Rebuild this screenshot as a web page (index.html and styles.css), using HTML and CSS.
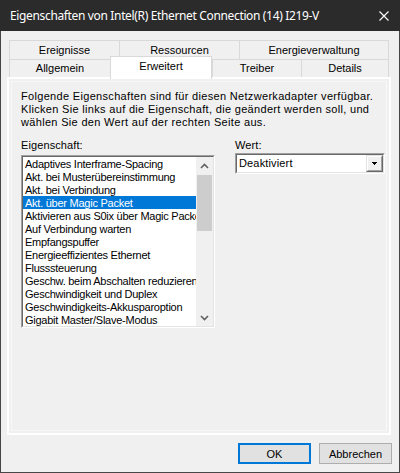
FILE: index.html
```html
<!DOCTYPE html>
<html lang="de">
<head>
<meta charset="utf-8">
<title>Eigenschaften</title>
<link rel="stylesheet" href="styles.css">
</head>
<body>
<div class="window">
  <div class="titlebar">
    <span class="title">Eigenschaften von Intel(R) Ethernet Connection (14) I219-V</span>
    <svg class="close" width="10" height="10" viewBox="0 0 10 10"><path d="M0.5 0.5 L9.5 9.5 M9.5 0.5 L0.5 9.5" stroke="#fff" stroke-width="1.1" fill="none"/></svg>
  </div>
  <div class="client">
    <div class="tabs">
      <div class="tabrow row1">
        <div class="tab w-ereignisse">Ereignisse</div>
        <div class="tab w-ressourcen">Ressourcen</div>
        <div class="tab w-energie last">Energieverwaltung</div>
      </div>
      <div class="tabrow row2">
        <div class="tab w-allgemein">Allgemein</div>
        <div class="tab w-erweitert selected">Erweitert</div>
        <div class="tab w-treiber">Treiber</div>
        <div class="tab w-details last">Details</div>
      </div>
    </div>
    <div class="pane">
      <div class="page">
        <p class="intro">Folgende Eigenschaften sind für diesen Netzwerkadapter verfügbar.<br>Klicken Sie links auf die Eigenschaft, die geändert werden soll, und<br>wählen Sie den Wert auf der rechten Seite aus.</p>
        <div class="columns">
          <div class="col-left">
            <div class="label">Eigenschaft:</div>
            <div class="sunken listbox">
              <div class="sunken-in list-in">
                <div class="items">
                  <div class="item">Adaptives Interframe-Spacing</div>
                  <div class="item">Akt. bei Musterübereinstimmung</div>
                  <div class="item">Akt. bei Verbindung</div>
                  <div class="item sel">Akt. über Magic Packet</div>
                  <div class="item">Aktivieren aus S0ix über Magic Packet</div>
                  <div class="item">Auf Verbindung warten</div>
                  <div class="item">Empfangspuffer</div>
                  <div class="item">Energieeffizientes Ethernet</div>
                  <div class="item">Flusssteuerung</div>
                  <div class="item">Geschw. beim Abschalten reduzieren</div>
                  <div class="item">Geschwindigkeit und Duplex</div>
                  <div class="item">Geschwindigkeits-Akkusparoption</div>
                  <div class="item">Gigabit Master/Slave-Modus</div>
                </div>
                <div class="vscroll">
                  <div class="sbtn"><svg width="9" height="6" viewBox="0 0 9 6"><path d="M1 5 L4.5 1.5 L8 5" stroke="#606060" stroke-width="1.6" fill="none"/></svg></div>
                  <div class="track"><div class="thumb"></div></div>
                  <div class="sbtn"><svg width="9" height="6" viewBox="0 0 9 6"><path d="M1 1 L4.5 4.5 L8 1" stroke="#606060" stroke-width="1.6" fill="none"/></svg></div>
                </div>
              </div>
            </div>
          </div>
          <div class="col-right">
            <div class="label">Wert:</div>
            <div class="sunken combo">
              <div class="sunken-in combo-in">
                <span class="combo-text">Deaktiviert</span>
                <div class="raised dropbtn">
                  <div class="raised-in">
                    <svg width="5" height="3" viewBox="0 0 5 3" shape-rendering="crispEdges"><path d="M0 0 H5 V1 H4 V2 H3 V3 H2 V2 H1 V1 H0 Z" fill="#000"/></svg>
                  </div>
                </div>
              </div>
            </div>
          </div>
        </div>
      </div>
    </div>
    <div class="buttons">
      <button class="btn default">OK</button>
      <button class="btn">Abbrechen</button>
    </div>
  </div>
</div>
</body>
</html>
```
FILE: styles.css
```css
* { box-sizing: border-box; }
html, body { margin: 0; padding: 0; }
body {
  width: 400px;
  height: 473px;
  overflow: hidden;
  font-family: "Liberation Sans", Arial, sans-serif;
  font-size: 11px;
  color: #000;
}
.window {
  width: 400px;
  height: 473px;
  border: 1px solid #474747;
  border-top: 0;
  background: #f0f0f0;
  display: flex;
  flex-direction: column;
}
.titlebar {
  height: 31px;
  margin: 0 -1px;
  background: #2b2b2b;
  display: flex;
  align-items: center;
  justify-content: space-between;
  padding: 0 11px 0 10px;
  flex: none;
}
.title {
  font-family: "Noto Sans", sans-serif;
  font-size: 12px;
  letter-spacing: -0.35px;
  color: #fff;
  white-space: nowrap;
}
.close { display: block; }
.client {
  flex: 1;
  padding: 9px 8px 0 6px;
  display: flex;
  flex-direction: column;
}
.tabs {
  margin: 0 2px;
  width: 380px;
}
.tabrow {
  display: flex;
  align-items: flex-start;
}
.row1 { height: 19px; }
.row2 { height: 18px; }
.tab {
  background: #f0f0f0;
  border-top: 1px solid #d9d9d9;
  border-left: 1px solid #d9d9d9;
  text-align: center;
  white-space: nowrap;
}
.row1 .tab { height: 19px; line-height: 19px; }
.row2 .tab { height: 18px; line-height: 17px; }
.tab.last { border-right: 1px solid #d9d9d9; }
.w-ereignisse { width: 110px; }
.w-ressourcen { width: 120px; }
.w-energie { width: 150px; }
.w-allgemein { width: 101px; }
.w-erweitert { width: 102px; }
.w-treiber { width: 89px; }
.w-details { width: 88px; }
.row2 .tab.selected {
  position: relative;
  z-index: 1;
  background: #fff;
  border-right: 1px solid #d9d9d9;
  margin-top: -3px;
  height: 23px;
  line-height: 18px;
}
.pane {
  height: 358px;
  border: 2px solid #fff;
  padding: 2px;
  background: #f0f0f0;
  flex: none;
}
.page {
  height: 100%;
  border: 1px solid #f8f8f8;
  padding: 8px 0 0 9px;
}
.intro {
  margin: 0;
  line-height: 13px;
  letter-spacing: 0.32px;
  white-space: nowrap;
}
.columns {
  display: flex;
  gap: 20px;
  margin-top: 10px;
}
.label { line-height: 13px; white-space: nowrap; letter-spacing: 0.1px; }
.col-left { width: 194px; }
.col-right { width: 150px; }
.sunken {
  border: 1px solid;
  border-color: #a0a0a0 #fff #fff #a0a0a0;
}
.sunken-in {
  border: 1px solid;
  border-color: #696969 #e3e3e3 #e3e3e3 #696969;
  background: #fff;
}
.listbox { margin-top: 3px; height: 173px; }
.list-in { height: 100%; display: flex; }
.items {
  width: 173px;
  overflow: hidden;
}
.item {
  height: 13px;
  line-height: 15px;
  padding-left: 2px;
  letter-spacing: -0.25px;
  white-space: nowrap;
}
.item.sel { background: #0078d7; color: #fff; }
.vscroll {
  width: 17px;
  background: #f0f0f0;
  display: flex;
  flex-direction: column;
}
.sbtn {
  height: 17px;
  display: flex;
  align-items: center;
  justify-content: center;
  flex: none;
}
.sbtn svg { display: block; }
.track { flex: 1; padding: 1px 1px 0 1px; }
.thumb { height: 56px; background: #cdcdcd; }
.combo { margin-top: 1px; height: 21px; }
.combo-in {
  height: 100%;
  display: flex;
  align-items: center;
  justify-content: space-between;
  padding-left: 2px;
}
.combo-text { line-height: 13px; white-space: nowrap; letter-spacing: 0.15px; }
.raised {
  width: 17px;
  height: 17px;
  border: 1px solid;
  border-color: #e3e3e3 #696969 #696969 #e3e3e3;
}
.raised-in {
  height: 100%;
  border: 1px solid;
  border-color: #fff #a0a0a0 #a0a0a0 #fff;
  background: #f0f0f0;
  display: flex;
  align-items: center;
  justify-content: center;
}
.raised-in svg { display: block; }
.buttons {
  display: flex;
  justify-content: flex-end;
  gap: 8px;
  margin-top: 8px;
  margin-right: -1px;
}
.btn {
  width: 73px;
  height: 21px;
  padding: 0;
  background: #e1e1e1;
  border: 1px solid #adadad;
  font-family: "Liberation Sans", Arial, sans-serif;
  font-size: 11px;
  color: #000;
}
.btn.default { border: 2px solid #0078d7; }
```
